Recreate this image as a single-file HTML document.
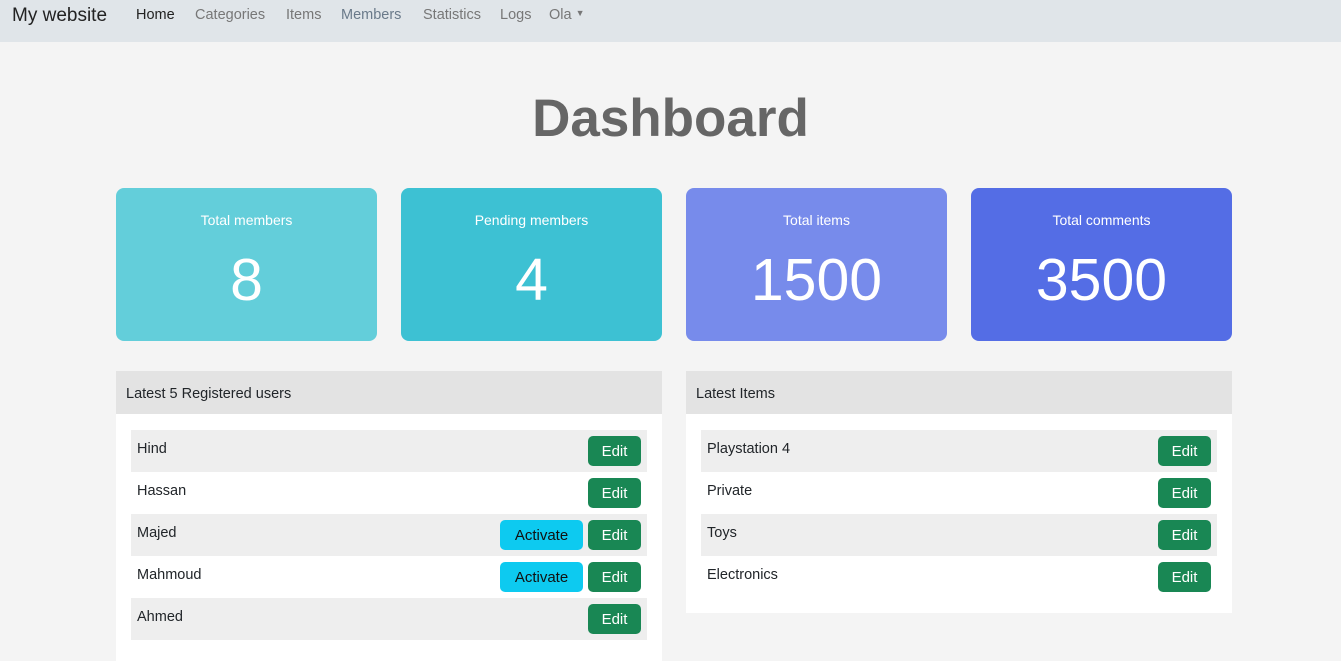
<!DOCTYPE html>
<html><head><style>
*{margin:0;padding:0;box-sizing:border-box}
body{width:1341px;height:651px;overflow:hidden;background:#f4f4f4;font-family:"Liberation Sans",sans-serif;color:#212529;position:relative}
.nav{position:absolute;left:0;top:0;width:1341px;height:42px;background:#e0e5e9}
.nav span{position:absolute;top:7px;font-size:14.5px;color:#777}
.brand{left:12px;font-size:19px!important;color:#222!important;top:5px!important}
h1{position:absolute;top:88px;left:0;width:1341px;text-align:center;font-size:53px;font-weight:bold;color:#666}
.card{position:absolute;top:188px;width:261px;height:153px;border-radius:8px;color:#fff;text-align:center}
.card .l{position:absolute;top:24px;width:100%;font-size:14px}
.card .n{position:absolute;top:58px;width:100%;font-size:59px}
.panel{position:absolute;top:371px;width:546px;background:#fff}
.ph{height:43px;background:#e3e3e3;font-size:14.5px;padding:15px 10px}
.rows{padding:16px 15px}
.row{height:42px;position:relative;font-size:14.5px;padding:11px 6px}
.row:nth-child(odd){background:#eee}
.btn{position:absolute;top:6px;height:30px;border-radius:5px;font-size:15px;text-align:center;line-height:31px}
.e{right:6px;width:53px;background:#198754;color:#fff}
.a{right:64px;width:83px;background:#0dcaf0;color:#111}
</style></head><body>
<div class="nav">
<span class="brand">My website</span>
<span style="left:136px;color:#222">Home</span>
<span style="left:195px">Categories</span>
<span style="left:286px">Items</span>
<span style="left:341px;color:#6a7a8a">Members</span>
<span style="left:423px">Statistics</span>
<span style="left:500px">Logs</span>
<span style="left:549px">Ola <span style="position:static;font-size:9px;vertical-align:3px">▼</span></span>
</div>
<h1>Dashboard</h1>
<div class="card" style="left:116px;background:#63ceda"><div class="l">Total members</div><div class="n">8</div></div>
<div class="card" style="left:401px;background:#3dc1d3"><div class="l">Pending members</div><div class="n">4</div></div>
<div class="card" style="left:686px;background:#778beb"><div class="l">Total items</div><div class="n">1500</div></div>
<div class="card" style="left:971px;background:#546de5"><div class="l">Total comments</div><div class="n">3500</div></div>
<div class="panel" style="left:116px;height:290px">
<div class="ph">Latest 5 Registered users</div>
<div class="rows">
<div class="row">Hind<div class="btn e">Edit</div></div>
<div class="row">Hassan<div class="btn e">Edit</div></div>
<div class="row">Majed<div class="btn a">Activate</div><div class="btn e">Edit</div></div>
<div class="row">Mahmoud<div class="btn a">Activate</div><div class="btn e">Edit</div></div>
<div class="row">Ahmed<div class="btn e">Edit</div></div>
</div></div>
<div class="panel" style="left:686px;height:242px">
<div class="ph">Latest Items</div>
<div class="rows">
<div class="row">Playstation 4<div class="btn e">Edit</div></div>
<div class="row">Private<div class="btn e">Edit</div></div>
<div class="row">Toys<div class="btn e">Edit</div></div>
<div class="row">Electronics<div class="btn e">Edit</div></div>
</div></div>
</body></html>
